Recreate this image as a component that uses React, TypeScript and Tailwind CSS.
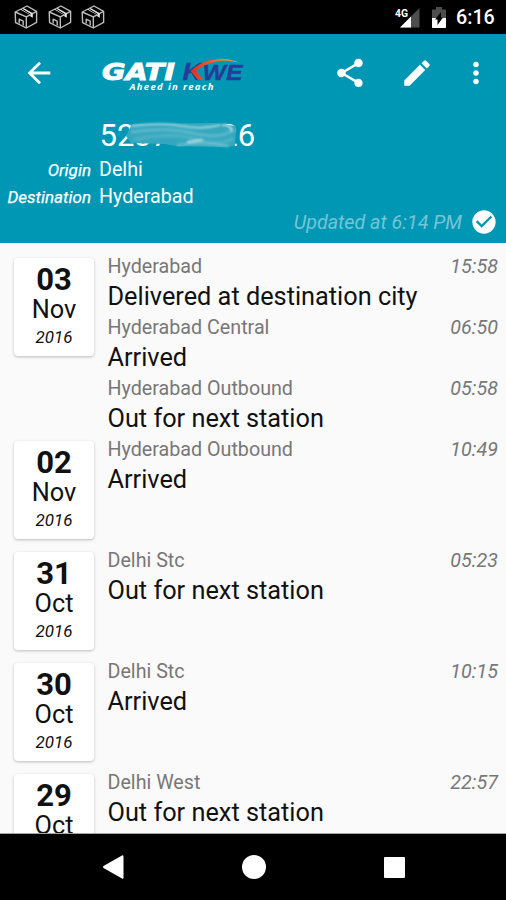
import { MdArrowBack, MdCheckCircle, MdEdit, MdMoreVert, MdShare } from "react-icons/md";

const days = [
  {
    day: "03",
    month: "Nov",
    year: "2016",
    events: [
      { place: "Hyderabad", time: "15:58", status: "Delivered at destination city" },
      { place: "Hyderabad Central", time: "06:50", status: "Arrived" },
      { place: "Hyderabad Outbound", time: "05:58", status: "Out for next station" },
    ],
  },
  { day: "02", month: "Nov", year: "2016", events: [{ place: "Hyderabad Outbound", time: "10:49", status: "Arrived" }] },
  { day: "31", month: "Oct", year: "2016", events: [{ place: "Delhi Stc", time: "05:23", status: "Out for next station" }] },
  { day: "30", month: "Oct", year: "2016", events: [{ place: "Delhi Stc", time: "10:15", status: "Arrived" }] },
  { day: "29", month: "Oct", year: "2016", events: [{ place: "Delhi West", time: "22:57", status: "Out for next station" }] },
];

function BoxIcon() {
  return (
    <svg width="24" height="24" viewBox="0 0 24 24" fill="none" stroke="#bdbdbd" strokeWidth="1.4" strokeLinejoin="round">
      <path d="M1.200 7 13 1l9.600 5.400v11L12.300 23 1.600 17.600z" />
      <path d="M1.200 7 12.300 11.800l10.300-5.400M12.300 11.800V23" />
      <path d="M6.200 4.600 9.500 2.900l9.300 5.300v4.600l-2.600-1.600V10z" fill="#e5e5e5" stroke="none" />
      <path d="m7.800 3.900 8.800 5.400" stroke="#000" strokeWidth="1" />
      <path d="M5.200 18.600v-4.400l4 1.900v4.400" />
    </svg>
  );
}

function StatusBar() {
  return (
    <div className="flex h-[34px] shrink-0 items-center bg-black pr-[11px] pl-[14px] text-white">
      <div className="flex gap-[9.500px]">
        <BoxIcon />
        <BoxIcon />
        <BoxIcon />
      </div>
      <svg className="ml-auto" width="28" height="24" viewBox="0 0 28 24">
        <path d="M25.500 3v19.500H6z" fill="#4d4d4d" />
        <path d="M17 11.500v11H6z" fill="#fff" />
        <text x="1" y="11.500" fill="#fff" stroke="#000" strokeWidth="2" paintOrder="stroke" fontSize="11" fontWeight="700" textLength="13" lengthAdjust="spacingAndGlyphs">4G</text>
      </svg>
      <svg className="ml-[9px]" width="16" height="22" viewBox="0 0 16 22">
        <path d="M5 1h6v2.500h3.200q.8 0 .8.800V21q0 1-1 1H2q-1 0-1-1V4.300q0-.8.800-.8H5z" fill="#4d4d4d" />
        <path d="M1 12h14v9q0 1-1 1H2q-1 0-1-1z" fill="#fff" />
        <path d="M10 6v5.500h2L6.500 19v-5.500H4z" fill="#000" />
      </svg>
      <span className="relative top-px ml-[9px] w-[39px] text-[19.700px] leading-none font-medium">6:16</span>
    </div>
  );
}

function Logo() {
  return (
    <svg width="146" height="40" viewBox="0 0 146 40" fontStyle="italic" fontWeight="700">
      <defs>
        <linearGradient id="arc" x1="0" x2="1">
          <stop offset="0" stopColor="#e52b22" />
          <stop offset="0.4" stopColor="#ee5a25" />
          <stop offset="1" stopColor="#c9b455" />
        </linearGradient>
      </defs>
      <text x="1" y="27" fill="#fff" stroke="#fff" strokeWidth="0.900" fontSize="22.500" fontFamily="'DejaVu Sans', sans-serif" textLength="73" lengthAdjust="spacingAndGlyphs">GATI</text>
      <g fill="#253c99" stroke="#253c99" strokeWidth="0.300" fontFamily="'Liberation Sans', sans-serif">
        <text x="81.500" y="26.500" fontSize="23" textLength="20" lengthAdjust="spacingAndGlyphs">K</text>
        <text x="101.500" y="26.500" fontSize="22.500" textLength="40" lengthAdjust="spacingAndGlyphs">WE</text>
      </g>
      <path d="M89.500 18Q98 10 108 7.500 124 3 138 9.500q-14-3-24-.5Q102 11.500 95 18l7.500 9h-5.500z" fill="url(#arc)" />
      <text x="28.500" y="36.500" fill="#fff" fontSize="9.500" fontFamily="'Open Sans', sans-serif" textLength="84" lengthAdjust="spacing">Aheed in reach</text>
    </svg>
  );
}

function Smudge() {
  return (
    <svg className="absolute top-0 left-[24px]" width="116" height="32" viewBox="0 0 116 32">
      <defs>
        <filter id="soft" x="-10%" y="-30%" width="120%" height="160%">
          <feGaussianBlur stdDeviation="1.100" />
        </filter>
        <filter id="edge" x="-5%" y="-10%" width="110%" height="120%">
          <feGaussianBlur stdDeviation="0.600" />
        </filter>
      </defs>
      <path d="M8 3 90 2l22 3-1 20-12 1-46-1-12-2-34-1-5-7z" fill="#36a8bf" filter="url(#edge)" />
      <g filter="url(#soft)" fill="none" strokeLinecap="round">
        <path d="M8 5q30-4 50 0t38-1" stroke="#b5dde6" strokeWidth="1.600" />
        <path d="M8 11q34-5 60 1t38-1" stroke="#5bb8ca" strokeWidth="3" />
        <path d="M12 18q36-7 60 0t36 0" stroke="#4fb2c5" strokeWidth="3" />
        <path d="M54 24q24-4 50 1" stroke="#71c2d1" strokeWidth="2" />
        <path d="m64 21 14-2M99 4q8 0 9 6" stroke="#b5dfe7" strokeWidth="2" />
      </g>
    </svg>
  );
}

function Header() {
  return (
    <header className="h-[209px] shrink-0 bg-[#0097b5] text-white">
      <div className="flex h-[78px] items-center pl-[22px]">
        <MdArrowBack size={34} />
        <div className="ml-[45px]">
          <Logo />
        </div>
        <div className="ml-auto flex items-center gap-[33px] pr-[13px]">
          <MdShare size={34} />
          <MdEdit size={34} />
          <MdMoreVert size={34} className="-ml-[8px]" />
        </div>
      </div>
      <div className="relative ml-[99.500px] flex h-[45px] items-center pt-[2px] text-[31px] leading-none">
        <span>5237</span>
        <span className="ml-[51px]">26</span>
        <div className="absolute top-[9px] left-0">
          <Smudge />
        </div>
      </div>
      <dl className="grid grid-cols-[91px_1fr] gap-x-2 text-[19.700px] leading-[26.500px]">
        <dt className="text-right text-[17px] italic [-webkit-text-stroke:0.250px_white]">Origin</dt>
        <dd>Delhi</dd>
        <dt className="text-right text-[17px] italic [-webkit-text-stroke:0.250px_white]">Destination</dt>
        <dd>Hyderabad</dd>
      </dl>
      <div className="flex h-[26px] items-center justify-end gap-[8px] pr-[8px] text-[19.700px] text-[#74c5d6] italic">
        <span>Updated at 6:14 PM</span>
        <MdCheckCircle size={28} className="-mt-[2px] text-white" />
      </div>
    </header>
  );
}

export default function App() {
  return (
    <main className="flex h-[900px] w-[506px] flex-col overflow-hidden bg-[#fafafa] font-[Roboto,sans-serif]">
      <StatusBar />
      <Header />
      <section className="min-h-0 flex-1 overflow-hidden border-b border-[#a3a3a3] pt-[9px]">
        {days.map((item) => (
          <div key={item.day} className="flex items-start pr-[8px] pl-[14px]">
            <div className="mt-[6px] mb-[7px] h-[98px] w-[80px] shrink-0 rounded-[4px] bg-white pt-[5px] text-center text-[#111] shadow-[0_1px_3px_rgba(0,0,0,0.25)]">
              <div className="text-[31px] leading-[33px] font-bold">{item.day}</div>
              <div className="text-[25.300px] leading-[27px]">{item.month}</div>
              <div className="text-[17px] leading-[28px] italic">{item.year}</div>
            </div>
            <div className="ml-[13.500px] flex-1">
              {item.events.map((event) => (
                <div key={event.time} className="h-[61px]">
                  <div className="flex justify-between text-[19.700px] leading-[30px] text-[#777]">
                    <span>{event.place}</span>
                    <span className="italic">{event.time}</span>
                  </div>
                  <div className="text-[25.300px] leading-[29px] text-[#111]">{event.status}</div>
                </div>
              ))}
            </div>
          </div>
        ))}
      </section>
      <nav className="flex h-[66px] shrink-0 items-center bg-black pl-[102px]">
        <svg width="22" height="26" viewBox="0 0 22 26" fill="#fff">
          <path d="M20 1.500q1.500-.8 1.500 1v21q0 1.800-1.500 1L1.500 14q-1.200-1 0-2z" />
        </svg>
        <div className="ml-[118px] size-[24px] rounded-full bg-white" />
        <div className="ml-[118px] size-[21px] rounded-[1px] bg-white" />
      </nav>
    </main>
  );
}
